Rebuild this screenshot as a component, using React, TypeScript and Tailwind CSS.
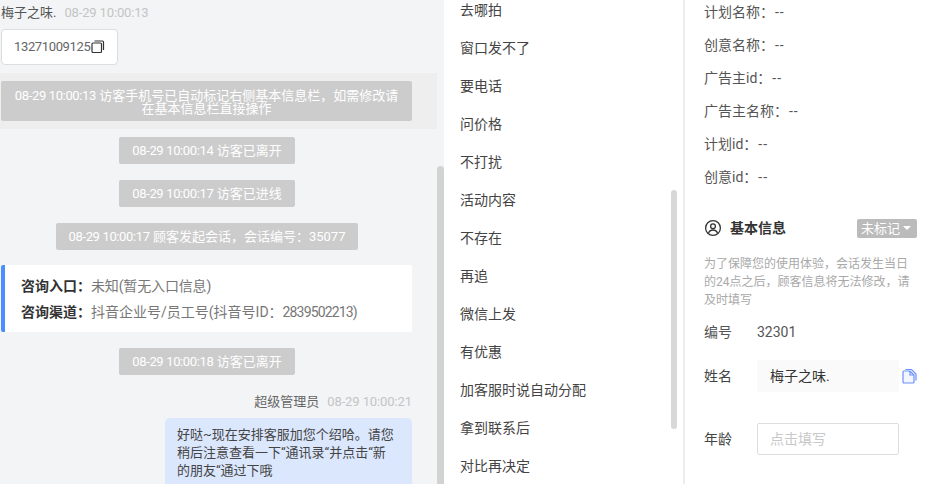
import React from "react";

const font = { fontFamily: 'Roboto, "Noto Sans CJK SC", sans-serif' };

function Time({ children }: { children: React.ReactNode }) {
  return <span className="tracking-[-0.36px]">{children}</span>;
}

function Sys({ time, text }: { time: string; text: string }) {
  return (
    <div className="flex justify-center w-[412px] ml-px">
      <div className="h-[27px] leading-[27px] px-[13px] bg-[#cccccc] text-white text-[13px] rounded-[2px]">
        <Time>{time}</Time> {text}
      </div>
    </div>
  );
}

const items = ["去哪拍", "窗口发不了", "要电话", "问价格", "不打扰", "活动内容", "不存在", "再追", "微信上发", "有优惠", "加客服时说自动分配", "拿到联系后", "对比再决定"];
const meta = ["计划名称：", "创意名称：", "广告主id：", "广告主名称：", "计划id：", "创意id："];

export default function App() {
  return (
    <div className="flex w-[931px] h-[484px] overflow-hidden bg-white" style={font}>
      <div className="relative w-[444px] h-full overflow-hidden bg-[#f3f4f6] shrink-0">
        <div className="pt-[4px]">
          <div className="flex items-center h-[18px] ml-px text-[13px] text-[#555555] gap-[8px]">
            <span>梅子之味.</span>
            <span className="text-[#c4c4c4] tracking-[-0.15px]">08-29 10:00:13</span>
          </div>
          <div className="mt-[7px] ml-px w-[117px] h-[36px] flex items-center pl-[12px] bg-white border border-[#dddddd] rounded text-[13px] text-[#666666]">
            <Time>13271009125</Time>
            <svg width="14" height="14" viewBox="0 0 14 14" fill="none" stroke="#333" strokeWidth="1.2" className="ml-[1px]">
              <rect x="1" y="3" width="9.5" height="9.5" rx="1" />
              <path d="M3.5 1h8a1 1 0 0 1 1 1v8" />
            </svg>
          </div>
          <div className="mt-[8px] w-[437px] h-[56px] bg-[#eeeeee] flex items-center">
            <div className="ml-px w-[411px] h-[40px] bg-[#cccccc] rounded-[2px] text-white text-[13px] leading-[13px] text-center px-[13px] pt-[8px]">
              <Time>08-29 10:00:13</Time> 访客手机号已自动标记右侧基本信息栏，如需修改请在基本信息栏直接操作
            </div>
          </div>
          <div className="mt-[8px] flex flex-col gap-[16px]">
            <Sys time="08-29 10:00:14" text="访客已离开" />
            <Sys time="08-29 10:00:17" text="访客已进线" />
            <Sys time="08-29 10:00:17" text="顾客发起会话，会话编号：35077" />
          </div>
          <div className="mt-[15px] ml-px w-[411px] h-[67px] bg-white border-l-[4px] border-[#4c8dff] rounded-[2px] text-[14px] pl-[16px] flex flex-col justify-center gap-[8px] leading-[18px] text-[#777777]">
            <div><b className="text-[#333333] font-bold">咨询入口：</b><span className="tracking-[-0.15px]">未知(暂无入口信息)</span></div>
            <div><b className="text-[#333333] font-bold">咨询渠道：</b>抖音企业号/员工号(抖音号ID：<span className="tracking-[-0.85px]">2839502213)</span></div>
          </div>
          <div className="mt-[16px]">
            <Sys time="08-29 10:00:18" text="访客已离开" />
          </div>
          <div className="mt-[18px] w-[412px] flex justify-end items-center h-[18px] gap-[8px] text-[13px] text-[#666666]">
            <span>超级管理员</span>
            <span className="text-[#c4c4c4] tracking-[-0.1px]">08-29 10:00:21</span>
          </div>
          <div className="mt-[7px] ml-[165px] w-[247px] bg-[#dbe7fd] rounded-[5px] pl-[12px] pr-[16px] py-[8px] text-[13px] leading-[18px] text-[#444444]">
            好哒~现在安排客服加您个绍哈。请您稍后注意查看一下“通讯录“并点击“新的朋友“通过下哦
          </div>
        </div>
        <div className="absolute left-[437px] top-[166px] bottom-0 w-[7px] rounded-t bg-[#d2d2d2]" />
      </div>

      <div className="relative w-[239px] h-full overflow-hidden shrink-0 text-[14px] text-[#444444] pl-[16px]">
        <div className="-mt-[9px]">
          {items.map((t) => (
            <div key={t} className="h-[38px] flex items-center">{t}</div>
          ))}
        </div>
        <div className="absolute left-[227px] top-[190px] w-[6px] h-[239px] rounded bg-[#d8d8d8]" />
      </div>

      <div className="flex-1 h-full overflow-hidden border-l-2 border-[#ececec] pl-[19px] pr-[14px] text-[14px] text-[#555555]">
        <div className="pt-[2px]">
          {meta.map((t) => (
            <div key={t} className="h-[33px] leading-[20px] flex gap-[1px]">
              <span>{t}</span>
              <span className="tracking-[1px]">--</span>
            </div>
          ))}
        </div>
        <div className="mt-[17px] flex items-center h-[22px]">
          <svg width="18" height="18" viewBox="0 0 18 18" fill="none" stroke="#333" strokeWidth="1.3">
            <circle cx="9" cy="9" r="7.4" />
            <circle cx="9" cy="7.2" r="2.4" />
            <path d="M4.6 14.2c.6-2.2 2.3-3.2 4.4-3.2s3.8 1 4.4 3.2" />
          </svg>
          <span className="ml-[8px] font-bold text-[14px] text-[#333333]">基本信息</span>
          <div className="ml-auto w-[60px] h-[19px] bg-[#bbbbbb] rounded-[2px] text-white text-[13px] leading-[19px] pl-[4px] flex items-center">
            未标记
            <span className="ml-[3px] w-0 h-0 border-x-[4px] border-x-transparent border-t-[4px] border-t-white" />
          </div>
        </div>
        <p className="mt-[16px] text-[12px] leading-[18px] text-[#a9a9a9]">为了保障您的使用体验，会话发生当日的24点之后，顾客信息将无法修改，请及时填写</p>
        <div className="mt-[13px] flex items-center h-[20px]">
          <span className="w-[53px]">编号</span>
          <span>32301</span>
        </div>
        <div className="mt-[18px] flex items-center">
          <span className="w-[53px] text-[#444444]">姓名</span>
          <div className="w-[142px] h-[32px] leading-[32px] bg-[#fafafa] rounded-[2px] pl-[13px] text-[#333333]">梅子之味.</div>
          <svg width="15" height="16" viewBox="0 0 15 16" fill="none" stroke="#6a8fff" strokeWidth="1.2" className="ml-[3px] mb-[1px]">
            <path d="M3.5 1.5h6l4.5 4.5v6.5" />
            <path d="M1 4a1 1 0 0 1 1-1h6l4 4v7a1 1 0 0 1-1 1H2a1 1 0 0 1-1-1z" fill="#f4f7ff" />
            <path d="M8 3v4h4" />
          </svg>
        </div>
        <div className="mt-[31px] flex items-center">
          <span className="w-[53px] text-[#444444]">年龄</span>
          <div className="w-[142px] h-[32px] leading-[30px] border border-[#dddddd] rounded-[2px] pl-[12px] text-[#c8c8c8]">点击填写</div>
        </div>
      </div>
    </div>
  );
}
